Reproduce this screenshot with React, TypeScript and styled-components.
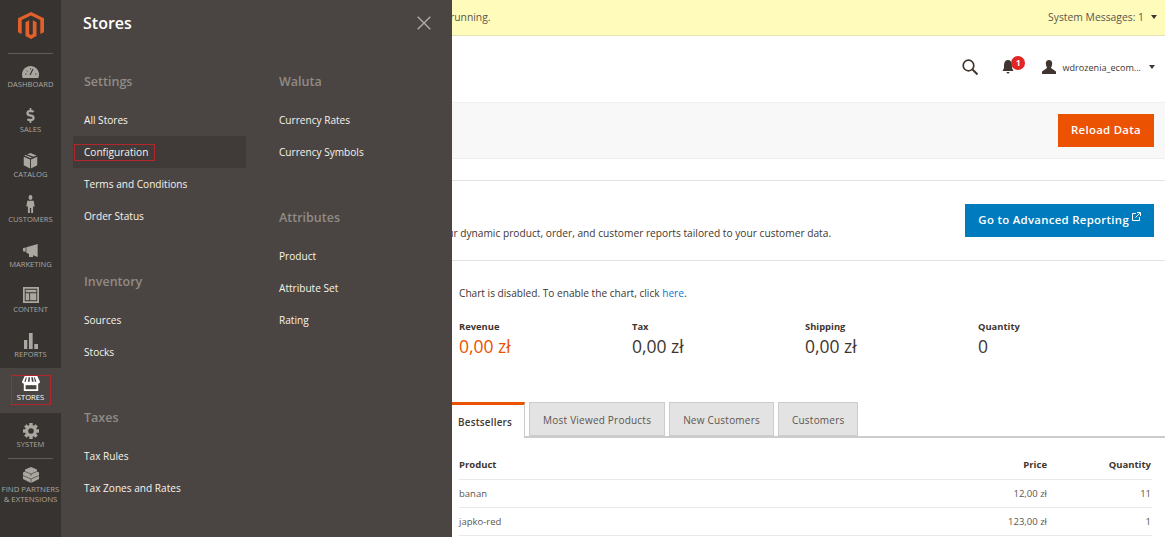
import React from "react";
import styled, { createGlobalStyle } from "styled-components";
import { FaDollarSign } from "react-icons/fa";

const Global = createGlobalStyle`
  html, body { margin: 0; padding: 0; background: #fff; }
  body { font-family: "Open Sans", "Liberation Sans", sans-serif; color: #41362f; overflow: hidden; }
  * { box-sizing: border-box; }
`;

const Shell = styled.div`
  display: flex;
  width: 1174px;
  height: 537px;
  overflow: hidden;
`;

const Rail = styled.nav`
  width: 61px;
  flex: none;
  background: #373330;
  display: flex;
  flex-direction: column;
  align-items: stretch;
`;

const LogoBox = styled.div`
  height: 54px;
  margin: 0 8px;
  display: flex;
  align-items: center;
  justify-content: center;
  border-bottom: 1px solid #625d59;
  padding-bottom: 2px;
`;

const RailItem = styled.div<{ $active?: boolean; $h?: number }>`
  height: ${(p) => p.$h ?? 45}px;
  display: flex;
  flex-direction: column;
  align-items: center;
  justify-content: flex-end;
  padding-bottom: 8px;
  background: ${(p) => (p.$active ? "#4a4542" : "transparent")};
  color: ${(p) => (p.$active ? "#fff" : "#aaa6a0")};
  font-size: 7.6px;
  line-height: 11px;
  text-transform: uppercase;
`;

const RailIcon = styled.div<{ $lift?: number }>`
  height: 17px;
  margin-bottom: ${(p) => p.$lift ?? 0}px;
  display: flex;
  align-items: center;
  justify-content: center;
`;

const StoresMark = styled.div`
  width: 40px;
  height: 30px;
  border: 1px solid #b3262c;
  display: flex;
  flex-direction: column;
  align-items: center;
  justify-content: flex-end;
  gap: 1px;
  padding-bottom: 1px;
`;

const RailRule = styled.div`
  height: 1px;
  margin: 0 8px;
  background: #625d59;
`;

const FindItem = styled.div`
  display: flex;
  flex-direction: column;
  align-items: center;
  color: #aaa6a0;
  font-size: 7.8px;
  line-height: 10px;
  text-transform: uppercase;
  text-align: center;
  white-space: nowrap;
  padding-top: 8px;
`;

const FindMark = styled.div`
  height: 17px;
  display: flex;
  align-items: flex-start;
`;

const Panel = styled.aside`
  width: 391px;
  flex: none;
  background: #4a4542;
  padding: 0 12px;
  display: flex;
  flex-direction: column;
`;

const PanelHead = styled.div`
  height: 46px;
  display: flex;
  align-items: center;
  justify-content: space-between;
  padding: 1px 9px 1px 10px;
`;

const PanelTitle = styled.h1`
  margin: 0;
  font-size: 16px;
  font-weight: 600;
  color: #fff;
`;

const PanelCols = styled.div`
  display: flex;
  padding-top: 20px;
`;

const PanelCol = styled.div`
  width: 195px;
  flex: none;
  display: flex;
  flex-direction: column;
`;

const Group = styled.section`
  margin-bottom: 33px;
  display: flex;
  flex-direction: column;
`;

const GroupTitle = styled.h2`
  margin: 0 0 7px;
  height: 32px;
  padding-left: 11px;
  font-size: 12.5px;
  font-weight: 600;
  line-height: 34px;
  color: #918b86;
`;

const MenuRow = styled.div<{ $current?: boolean }>`
  height: 32px;
  width: 173px;
  display: flex;
  align-items: center;
  padding-left: ${(p) => (p.$current ? 1 : 11)}px;
  font-size: 10.1px;
  color: #f7f3eb;
  background: ${(p) => (p.$current ? "#403b38" : "transparent")};
`;

const MarkedLabel = styled.span`
  border: 1px solid #b3262c;
  padding: 0 0 0 9px;
  width: 81px;
  height: 17px;
  line-height: 15px;
  display: block;
`;

const Main = styled.main`
  width: 713px;
  flex: none;
  overflow: hidden;
  display: flex;
  flex-direction: column;
`;

const Notice = styled.div`
  height: 36px;
  flex: none;
  background: #fffbbb;
  border-bottom: 1px solid #e3e0b4;
  display: flex;
  align-items: center;
  justify-content: space-between;
  padding: 0 8px 2px 0;
  font-size: 10.35px;
  color: #5c554f;
`;

const NoticeText = styled.span`
  margin-left: -2px;
`;

const Caret = styled.span`
  display: inline-block;
  width: 0;
  height: 0;
  border-left: 3.5px solid transparent;
  border-right: 3.5px solid transparent;
  border-top: 4px solid #3d3733;
`;

const Messages = styled.span`
  display: flex;
  align-items: center;
  gap: 7px;
`;

const TopBar = styled.div`
  height: 66px;
  flex: none;
  display: flex;
  align-items: center;
  justify-content: flex-end;
  padding: 0 10px 4px 0;
`;

const Bell = styled.div`
  position: relative;
  width: 12px;
  height: 14px;
  margin-left: 24px;
  margin-right: 28px;
  display: flex;
`;

const Badge = styled.span`
  position: absolute;
  left: 9px;
  top: -4px;
  width: 14px;
  height: 14px;
  border-radius: 50%;
  background: #e22626;
  color: #fff;
  font-size: 8px;
  font-weight: 700;
  line-height: 14px;
  text-align: center;
`;

const UserName = styled.span`
  font-size: 9.1px;
  color: #41362f;
  margin: 0 8px 0 6px;
`;

const ActionBar = styled.div`
  height: 57px;
  flex: none;
  background: #f8f8f8;
  border-top: 1px solid #f0f0f0;
  border-bottom: 1px solid #eeeeee;
  display: flex;
  align-items: center;
  justify-content: flex-end;
  padding-right: 11px;
`;

const Button = styled.div<{ $bg: string }>`
  height: 33px;
  padding: 0 13px 2px;
  display: flex;
  align-items: center;
  gap: 3px;
  background: ${(p) => p.$bg};
  color: #fff;
  font-size: 11.4px;
  font-weight: 600;
  letter-spacing: 0.3px;
`;

const Spacer = styled.div`
  height: 22px;
  flex: none;
  border-bottom: 1px solid #e3e3e3;
`;

const Reporting = styled.div`
  height: 80px;
  flex: none;
  border-bottom: 1px solid #e3e3e3;
  display: flex;
  align-items: center;
  justify-content: space-between;
  padding: 0 11px 0 0;
`;

const ReportingText = styled.p`
  margin: 24px 0 0 -11px;
  font-size: 10.2px;
  color: #41362f;
  white-space: nowrap;
`;

const Body = styled.div`
  padding: 25px 13px 0 7px;
`;

const ChartNote = styled.p`
  margin: 0;
  font-size: 10.15px;
  line-height: 15px;
  color: #41362f;
`;

const Link = styled.span`
  color: #007bdb;
`;

const Stats = styled.div`
  display: flex;
  margin-top: 19px;
  height: 82px;
`;

const Stat = styled.div`
  width: 173px;
  flex: none;
`;

const StatLabel = styled.div`
  font-size: 9.4px;
  font-weight: 700;
  line-height: 14px;
  color: #41362f;
`;

const StatValue = styled.div<{ $accent?: boolean }>`
  font-size: 17.5px;
  line-height: 24px;
  color: ${(p) => (p.$accent ? "#eb5202" : "#41362f")};
`;

const Tabs = styled.div`
  display: flex;
  align-items: flex-end;
  gap: 4px;
  height: 36px;
  margin: 0 -13px 0 -7px;
  border-bottom: 2px solid #cccccc;
`;

const Tab = styled.div<{ $active?: boolean }>`
  height: ${(p) => (p.$active ? 36 : 34)}px;
  margin-bottom: ${(p) => (p.$active ? -2 : 0)}px;
  padding: ${(p) => (p.$active ? "0 12px 0 6px" : "1px 13px 0")};
  display: flex;
  align-items: center;
  font-size: ${(p) => (p.$active ? 9.9 : 10)}px;
  color: ${(p) => (p.$active ? "#41362f" : "#5c554f")};
  font-weight: ${(p) => (p.$active ? 600 : 400)};
  letter-spacing: 0.22px;
  background: ${(p) => (p.$active ? "#fff" : "#e3e3e3")};
  border: 1px solid #cccccc;
  border-bottom: ${(p) => (p.$active ? "none" : "1px solid #cccccc")};
  border-top: ${(p) => (p.$active ? "3px solid #eb5202" : "1px solid #cccccc")};
  border-left: ${(p) => (p.$active ? "none" : "1px solid #cccccc")};
`;

const Table = styled.table`
  width: 100%;
  margin-top: 13px;
  border-collapse: collapse;
  font-size: 9.5px;
  color: #5c554f;
  table-layout: fixed;
`;

const Th = styled.th<{ $w?: number; $right?: boolean }>`
  height: 28px;
  padding: 0 ${(p) => (p.$right ? "1px" : "0")} 0 0;
  width: ${(p) => (p.$w ? `${p.$w}px` : "auto")};
  text-align: ${(p) => (p.$right ? "right" : "left")};
  font-weight: 700;
  color: #41362f;
  border-bottom: 1px solid #e9e9e9;
`;

const Td = styled.td<{ $right?: boolean }>`
  height: 28px;
  padding: 0 ${(p) => (p.$right ? "1px" : "0")} 0 0;
  text-align: ${(p) => (p.$right ? "right" : "left")};
  border-bottom: 1px solid #e9e9e9;
`;

const Logo = () => (
  <svg width="26" height="27" viewBox="0 0 26 32" preserveAspectRatio="none" aria-hidden="true">
    <path fill="#e2612b" d="M13 0 0 7.500V24l3.700 2.100V9.600L13 4.200l9.300 5.400v16.500L26 24V7.500z" />
    <path fill="#e2612b" d="M14.800 26.100 13 27.200l-1.800-1.100V9.800L7.500 12v16.400L13 32l5.500-3.600V12l-3.700-2.200z" />
  </svg>
);

const Gauge = () => (
  <svg width="17" height="12" viewBox="0 0 17 12">
    <path fill="currentColor" d="M8.500 0C3.800 0 0 3.800 0 8.500 0 9.700.2 10.900.7 12h15.600c.5-1.100.7-2.300.7-3.500C17 3.800 13.200 0 8.500 0z" />
    <path stroke="#373330" strokeWidth="1.100" d="M8 9 11 3" />
    <path stroke="#373330" strokeWidth=".8" d="M3 8h1.500M4.500 4.500l1 1M8.500 2v1.500M13 8h1.500" />
  </svg>
);
const Box = () => (
  <svg width="15" height="16" viewBox="0 0 20 19" preserveAspectRatio="none"><path fill="currentColor" d="M10 0 5.500 1.600l8.300 3L18 3zM3.500 2.400 1.600 3.100 10 6.200l2-.8zM1 4.600v10l8.400 3.900V7.600zM19 4.600l-8.400 3v10.900l8.400-3.900z" /></svg>
);
const Person = () => (
  <svg width="9" height="18" viewBox="0 0 14 22" preserveAspectRatio="none"><circle cx="7" cy="3" r="3" fill="currentColor" /><path fill="currentColor" d="M2 7h10l1.500 7H11v8H8v-6H6v6H3v-8H.5z" /></svg>
);
const Horn = () => (
  <svg width="16" height="13" viewBox="0 0 24 15" preserveAspectRatio="none"><path fill="currentColor" d="M0 4.500 4 4v5l-4-.5zM5 3.700 22 0v15l-7-2v2H9v-3.600L5 10z" /></svg>
);
const Layout = () => (
  <svg width="16" height="16" viewBox="0 0 18 18"><path fill="currentColor" fillRule="evenodd" d="M0 0h18v18H0zm2 2v14h14V2zm1 1h12v3H3zm0 4h4v8H3zm5 0h7v8H8z" /></svg>
);
const Bars = () => (
  <svg width="14" height="16" viewBox="0 0 17 16" preserveAspectRatio="none"><path fill="currentColor" d="M0 7h4v9H0zM6 0h4.500v16H6zM12.500 11H17v5h-4.500z" /></svg>
);
const Shop = () => (
  <svg width="18" height="15" viewBox="0 0 20 16" preserveAspectRatio="none"><path fill="currentColor" fillRule="evenodd" d="M3 0h14l3 6c0 1-1 2-2 2v8H2V8C1 8 0 7 0 6zm1.300 1.300L2.600 6h1.700l1-4.700zm3 0L6.500 6h2l.4-4.700zm3 0L11 6h2l-.8-4.700zm3 0 1 4.700h1.700l-1.700-4.700zM4 9.500V14h12V9.500c-.7.300-1.500.500-2 0-.8.600-2.500.600-4 0-1.500.600-3.200.600-4 0-.5.500-1.300.300-2 0z" /></svg>
);
const Gear = () => (
  <svg width="16" height="16" viewBox="0 0 16 16">
    <circle cx="8" cy="8" r="4.400" fill="none" stroke="currentColor" strokeWidth="3.200" />
    {[0, 45, 90, 135, 180, 225, 270, 315].map((a) => (
      <rect key={a} x="6.300" y="0" width="3.400" height="3" fill="currentColor" transform={`rotate(${a} 8 8)`} />
    ))}
  </svg>
);
const Bricks = () => (
  <svg width="16" height="16" viewBox="0 0 16 16">
    <path fill="currentColor" d="M8 0 2 2.500v2L0 5.500V12l8 4 8-4V5.500l-2-1v-2z" />
    <path fill="none" stroke="#373330" strokeWidth=".6" d="M2 4.500 8 7l6-2.500M0 8.500 8 12l8-3.500M8 7v2M8 12v4" />
  </svg>
);
const Close = () => (
  <svg width="14" height="14" viewBox="0 0 14 14"><path stroke="#b3aeaa" strokeWidth="1.300" fill="none" d="M.7.7l12.600 12.600M13.300.7.700 13.300" /></svg>
);
const Search = () => (
  <svg width="16" height="16" viewBox="0 0 16 16"><circle cx="6.500" cy="6.500" r="5.300" fill="none" stroke="#41362f" strokeWidth="1.700" /><path stroke="#41362f" strokeWidth="2" d="M10.500 10.500 15.500 15.500" /></svg>
);
const BellIcon = () => (
  <svg width="12" height="14" viewBox="0 0 12 14"><path fill="#41362f" d="M6 0C3.500 0 2 2 2 5v3L.5 11h11L10 8V5c0-3-1.500-5-4-5zM4.500 12a1.500 1.500 0 0 0 3 0z" /></svg>
);
const UserIcon = () => (
  <svg width="14" height="14" viewBox="0 0 14 14"><path fill="#41362f" d="M7 0c2 0 3.200 1.500 3.200 3.500S9 7 9 8l5 3.500V14H0v-2.500L5 8c0-1-1.200-2.500-1.200-4.500S5 0 7 0z" /></svg>
);
const ExternalMark = styled.svg`
  margin-top: -6px;
`;
const External = () => (
  <ExternalMark width="9" height="9" viewBox="0 0 9 9"><path fill="none" stroke="#fff" strokeWidth="1" d="M4 1.500H.5v7h7V5M3.500 5.500 8 1M5 .5h3.500V4" /></ExternalMark>
);

const groupsA = [
  { t: "Settings", items: ["All Stores", "Configuration", "Terms and Conditions", "Order Status"] },
  { t: "Inventory", items: ["Sources", "Stocks"] },
  { t: "Taxes", items: ["Tax Rules", "Tax Zones and Rates"] },
];
const groupsB = [
  { t: "Waluta", items: ["Currency Rates", "Currency Symbols"] },
  { t: "Attributes", items: ["Product", "Attribute Set", "Rating"] },
];

const MenuGroups = ({ groups }: { groups: { t: string; items: string[] }[] }) => (
  <>
    {groups.map((g) => (
      <Group key={g.t}>
        <GroupTitle>{g.t}</GroupTitle>
        {g.items.map((i) =>
          i === "Configuration" ? (
            <MenuRow key={i} $current><MarkedLabel>{i}</MarkedLabel></MenuRow>
          ) : (
            <MenuRow key={i}>{i}</MenuRow>
          )
        )}
      </Group>
    ))}
  </>
);

export default function App() {
  return (
    <Shell>
      <Global />
      <Rail>
        <LogoBox><Logo /></LogoBox>
        <RailItem $h={44}><RailIcon $lift={-1}><Gauge /></RailIcon>Dashboard</RailItem>
        <RailItem><RailIcon><FaDollarSign size={15} /></RailIcon>Sales</RailItem>
        <RailItem><RailIcon><Box /></RailIcon>Catalog</RailItem>
        <RailItem><RailIcon $lift={2}><Person /></RailIcon>Customers</RailItem>
        <RailItem><RailIcon><Horn /></RailIcon>Marketing</RailItem>
        <RailItem><RailIcon $lift={1}><Layout /></RailIcon>Content</RailItem>
        <RailItem><RailIcon><Bars /></RailIcon>Reports</RailItem>
        <RailItem $active>
          <StoresMark><Shop />Stores</StoresMark>
        </RailItem>
        <RailItem><RailIcon><Gear /></RailIcon>System</RailItem>
        <RailRule />
        <FindItem><FindMark><Bricks /></FindMark>Find Partners<br />&amp; Extensions</FindItem>
      </Rail>
      <Panel>
        <PanelHead>
          <PanelTitle>Stores</PanelTitle>
          <Close />
        </PanelHead>
        <PanelCols>
          <PanelCol><MenuGroups groups={groupsA} /></PanelCol>
          <PanelCol><MenuGroups groups={groupsB} /></PanelCol>
        </PanelCols>
      </Panel>
      <Main>
        <Notice>
          <NoticeText>running.</NoticeText>
          <Messages>System Messages: 1 <Caret /></Messages>
        </Notice>
        <TopBar>
          <Search />
          <Bell><BellIcon /><Badge>1</Badge></Bell>
          <UserIcon />
          <UserName>wdrozenia_ecom...</UserName>
          <Caret />
        </TopBar>
        <ActionBar><Button $bg="#eb5202">Reload Data</Button></ActionBar>
        <Spacer />
        <Reporting>
          <ReportingText>our dynamic product, order, and customer reports tailored to your customer data.</ReportingText>
          <Button $bg="#007bbd">Go to Advanced Reporting<External /></Button>
        </Reporting>
        <Body>
          <ChartNote>Chart is disabled. To enable the chart, click <Link>here</Link>.</ChartNote>
          <Stats>
            <Stat><StatLabel>Revenue</StatLabel><StatValue $accent>0,00 zł</StatValue></Stat>
            <Stat><StatLabel>Tax</StatLabel><StatValue>0,00 zł</StatValue></Stat>
            <Stat><StatLabel>Shipping</StatLabel><StatValue>0,00 zł</StatValue></Stat>
            <Stat><StatLabel>Quantity</StatLabel><StatValue>0</StatValue></Stat>
          </Stats>
          <Tabs>
            <Tab $active>Bestsellers</Tab>
            <Tab>Most Viewed Products</Tab>
            <Tab>New Customers</Tab>
            <Tab>Customers</Tab>
          </Tabs>
          <Table>
            <thead><tr><Th>Product</Th><Th $right $w={100}>Price</Th><Th $right $w={104}>Quantity</Th></tr></thead>
            <tbody>
              <tr><Td>banan</Td><Td $right>12,00 zł</Td><Td $right>11</Td></tr>
              <tr><Td>japko-red</Td><Td $right>123,00 zł</Td><Td $right>1</Td></tr>
            </tbody>
          </Table>
        </Body>
      </Main>
    </Shell>
  );
}
